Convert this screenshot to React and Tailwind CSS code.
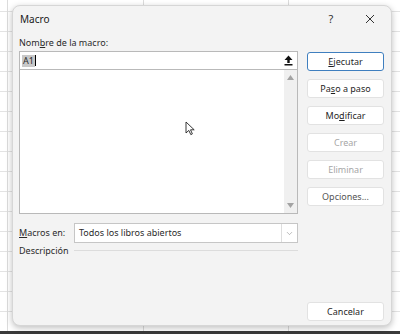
import { ChevronDown } from 'lucide-react';

const font = { fontFamily: '"Segoe UI", "Noto Sans", "Open Sans", sans-serif' };

function SideButton({ children, primary, disabled, className = '' }) {
  return (
    <div
      className={`h-[19px] w-[77px] flex items-center justify-center rounded-[3px] bg-white text-[9px] ${
        primary ? 'border border-[#3f7fbf]' : 'border border-[#e2e2e2]'
      } ${disabled ? 'text-[#a6a6a6]' : 'text-[#1f1f1f]'} ${className}`}
    >
      {children}
    </div>
  );
}

export default function App() {
  return (
    <div
      className="relative w-[400px] h-[334px] overflow-hidden bg-white"
      style={font}
    >
      {/* spreadsheet grid behind the dialog */}
      <div className="absolute inset-0 bg-[linear-gradient(to_bottom,#e3e3e3_1px,transparent_1px)] bg-[length:100%_20px] bg-[position:0_11px]" />
      <div className="absolute left-[7px] top-0 bottom-0 w-px bg-[#dcdcdc]" />
      <div className="absolute left-[143px] top-0 bottom-0 w-px bg-[#dcdcdc]" />
      <div className="absolute left-[288px] top-0 bottom-0 w-px bg-[#dcdcdc]" />
      <div className="absolute left-0 right-0 bottom-0 h-[3px] bg-[#3a3a3a]" />

      {/* dialog window */}
      <div className="absolute left-[12px] top-[5px] w-[380px] h-[321px] rounded-[8px] bg-[#f3f3f3] border border-[#d6d6d6] shadow-[0_2px_6px_rgba(0,0,0,0.25)] flex flex-col">
        <div className="flex items-center h-[24px] mt-[1px] pl-[7px]">
          <span className="text-[10px] text-[#1a1a1a] flex-1">Macro</span>
          <span className="text-[11px] text-[#333] w-[10px] text-center">?</span>
          <svg width="10" height="10" viewBox="0 0 10 10" className="ml-[29px] mr-[16px]">
            <path d="M1 1 L9 9 M9 1 L1 9" stroke="#333" strokeWidth="1" />
          </svg>
        </div>

        <div className="flex pl-[6px] pr-[7px] mt-[6px]">
          {/* left column */}
          <div className="w-[280px] flex flex-col">
            <span className="text-[9px] text-[#2a2a2a] leading-[12px] h-[12px]">
              Nom<span className="underline">b</span>re de la macro:
            </span>
            <div className="mt-[2px] h-[19px] flex items-center bg-white border border-[#b9b9b9]">
              <span className="ml-[2px] px-[1px] bg-[#c8c8c8] text-[9px] leading-[12px] text-[#2a2a2a]">A1</span>
              <span className="w-px h-[11px] bg-black" />
              <div className="ml-auto mr-[1px] w-[16px] h-[15px] flex items-center justify-center">
                <svg width="9" height="11" viewBox="0 0 9 11">
                  <path d="M4.5 0.5 L8.5 5 L5.7 5 L5.7 8 L3.3 8 L3.3 5 L0.5 5 Z" fill="#111" />
                  <rect x="0.5" y="9" width="8" height="1.5" fill="#111" />
                </svg>
              </div>
            </div>
            <div className="h-[144px] flex bg-white border border-[#b9b9b9] border-t-0">
              <div className="flex-1 relative">
                <svg width="11" height="15" viewBox="0 0 11 15" className="absolute left-[165px] top-[51px]">
                  <path d="M1 1 L1 12 L3.8 9.4 L5.8 13.6 L7.4 12.9 L5.5 8.8 L9.2 8.8 Z" fill="#fff" stroke="#222" strokeWidth="0.9" />
                </svg>
              </div>
              <div className="w-[13px] bg-[#f0f0f0] flex flex-col items-center justify-between py-[5px]">
                <svg width="7" height="5" viewBox="0 0 7 5"><path d="M0 5 L3.5 0 L7 5 Z" fill="#a3a3a3" /></svg>
                <svg width="7" height="5" viewBox="0 0 7 5"><path d="M0 0 L7 0 L3.5 5 Z" fill="#a3a3a3" /></svg>
              </div>
            </div>

            <div className="mt-[9px] flex items-center">
              <span className="w-[55px] text-[9px] text-[#2a2a2a]">
                <span className="underline">M</span>acros en:
              </span>
              <div className="flex-1 h-[20px] flex items-center bg-white border border-[#c6c6c6]">
                <span className="ml-[4px] text-[9px] text-[#2a2a2a] flex-1">Todos los libros abiertos</span>
                <div className="w-[16px] h-full border-l border-[#dedede] flex items-center justify-center">
                  <ChevronDown size={9} strokeWidth={1.5} color="#8a8a8a" />
                </div>
              </div>
            </div>

            <div className="mt-[1px] flex items-center">
              <span className="text-[9px] text-[#2a2a2a]">Descripción</span>
              <div className="flex-1 ml-[5px] h-px bg-[#dcdcdc]" />
            </div>
          </div>

          {/* right column */}
          <div className="ml-[9px] flex flex-col">
            <SideButton primary className="mt-[15px]">
              <span><span className="underline">E</span>jecutar</span>
            </SideButton>
            <SideButton className="mt-[8px]">
              <span>Pa<span className="underline">s</span>o a paso</span>
            </SideButton>
            <SideButton className="mt-[8px]">
              <span>Mo<span className="underline">d</span>ificar</span>
            </SideButton>
            <SideButton disabled className="mt-[8px]">Crear</SideButton>
            <SideButton disabled className="mt-[8px]">Eliminar</SideButton>
            <SideButton className="mt-[8px]">
              <span className="text-[#555]">Opciones...</span>
            </SideButton>
            <SideButton className="mt-[96px]">Cancelar</SideButton>
          </div>
        </div>
      </div>
    </div>
  );
}
